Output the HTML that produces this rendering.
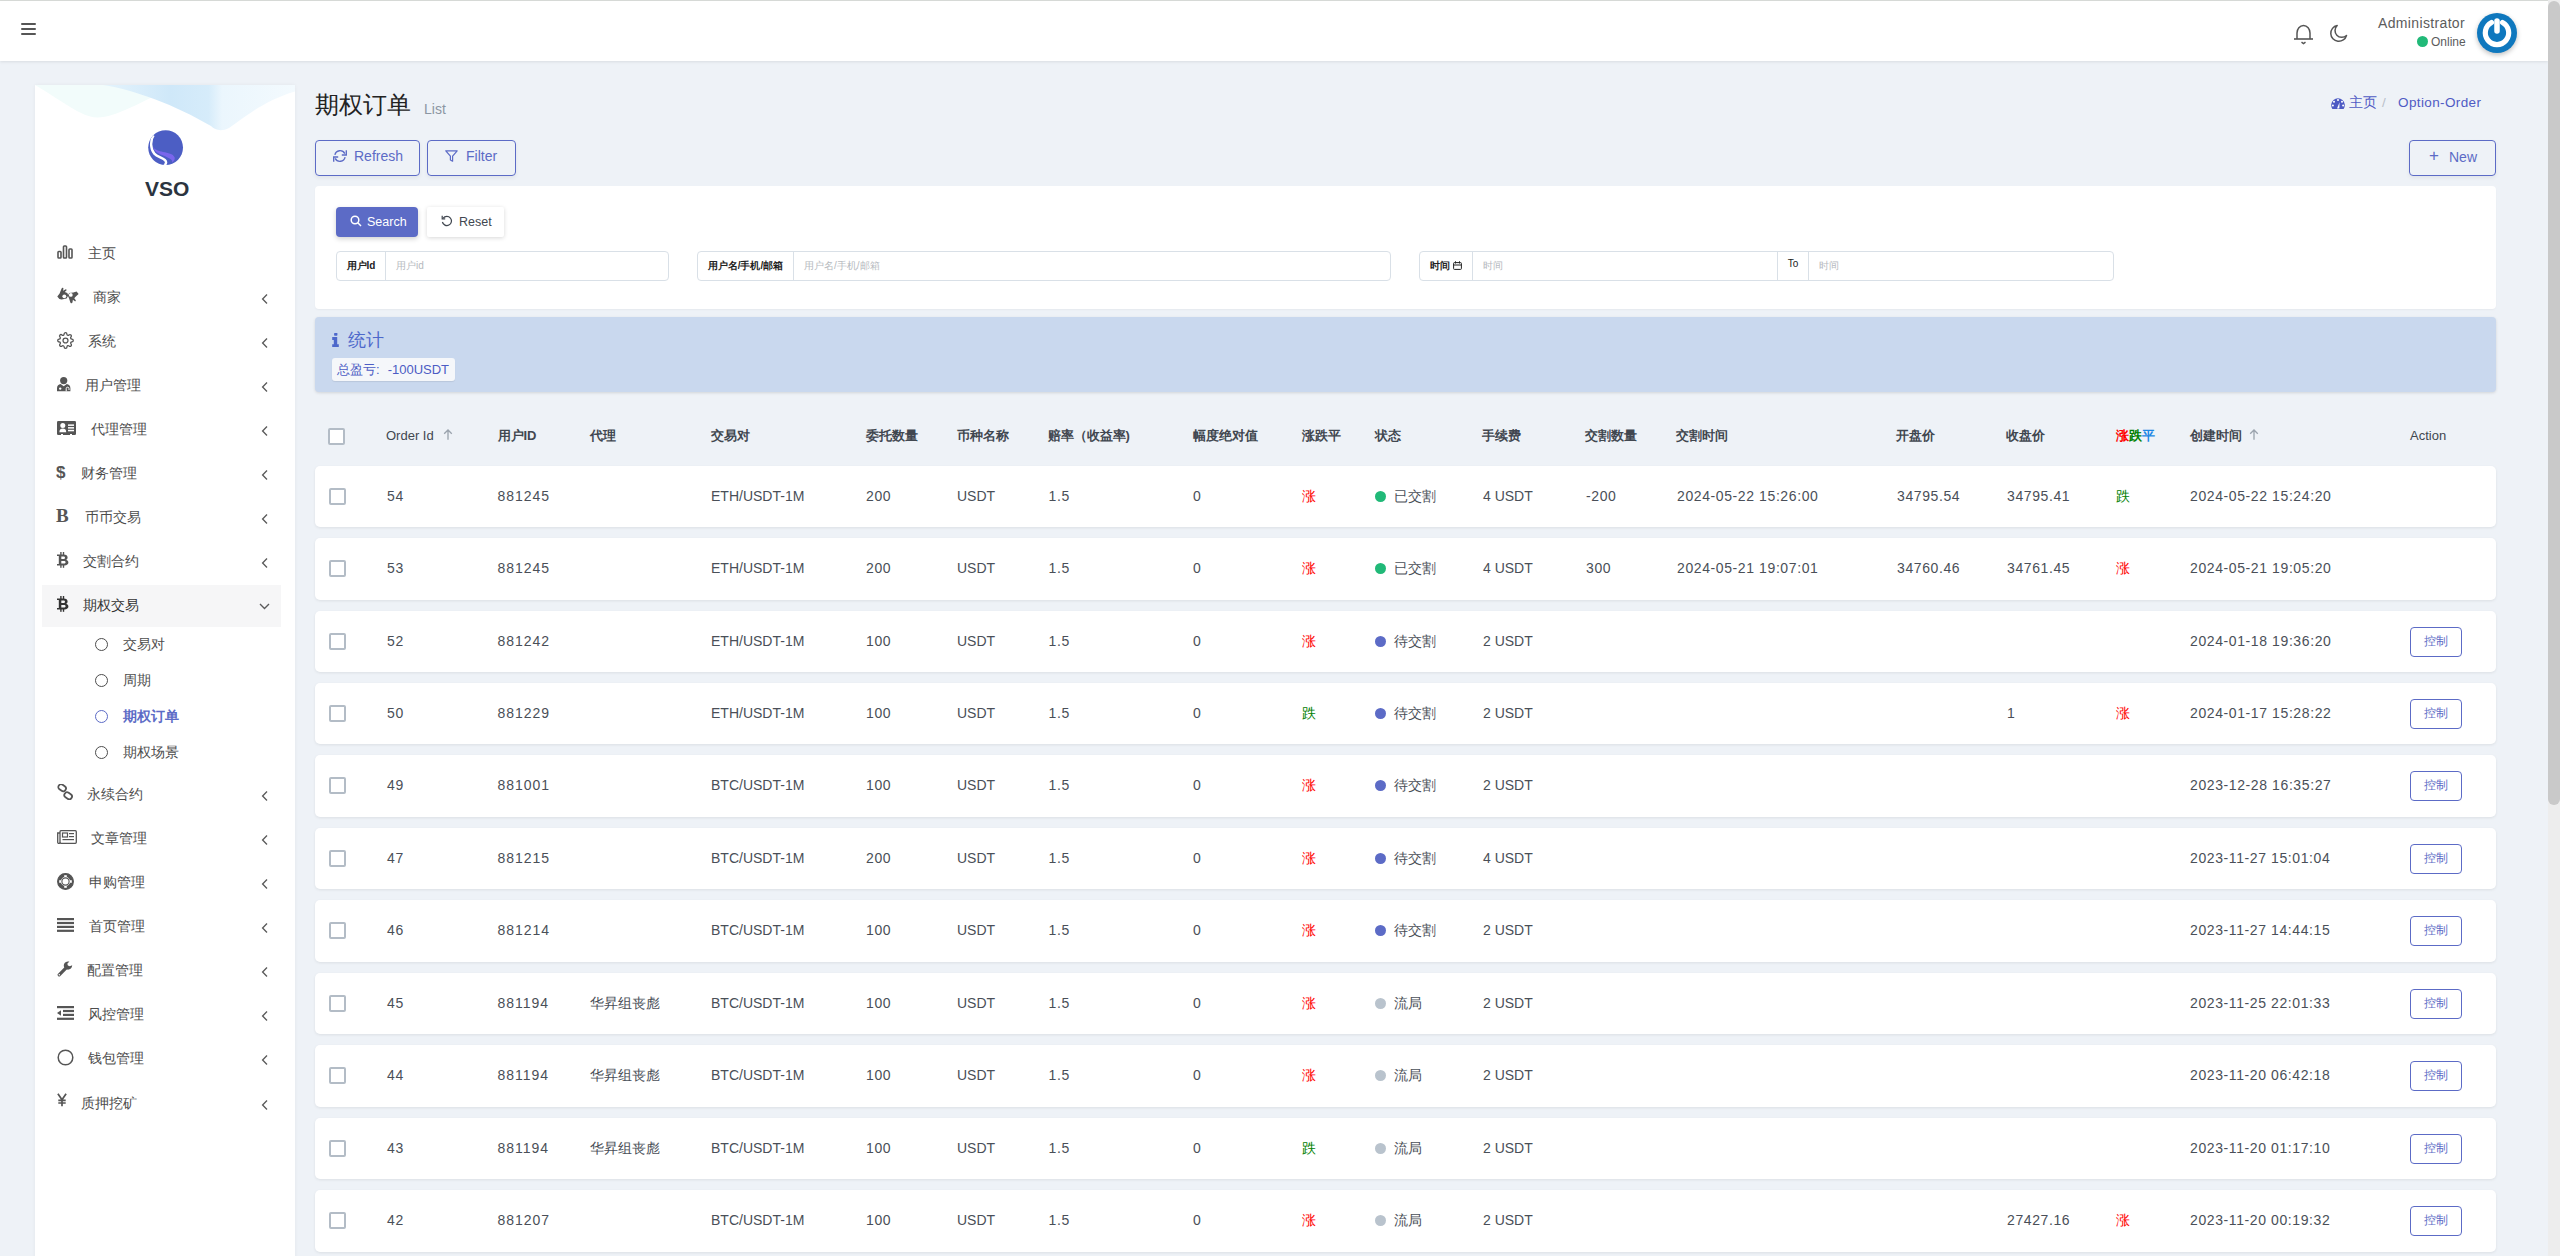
<!DOCTYPE html>
<html><head><meta charset="utf-8"><title>期权订单</title><style>
*{box-sizing:border-box;margin:0;padding:0}
html,body{width:2560px;height:1256px;overflow:hidden}
body{background:#eef2f7;font-family:"Liberation Sans",sans-serif;color:#414750;font-size:14px;position:relative}
.a{position:absolute;white-space:nowrap}
.n{letter-spacing:.6px}
#topline{left:0;top:0;width:2548px;height:1px;background:#d9dcd9}
#nav{left:0;top:1px;width:2548px;height:60px;background:#fff;box-shadow:0 1px 3px rgba(0,0,0,.09)}
.hb{left:21px;width:15px;height:2px;background:#565656;border-radius:1px}
#side{left:35px;top:85px;width:260px;height:1200px;background:#fff;box-shadow:0 0 4px rgba(0,0,0,.05)}
.mi{left:0;width:260px;height:44px;color:#4d4d4d;font-size:14px}
.mi .t{position:absolute;top:0;line-height:44px}
.mi .ic{position:absolute}
.chev{position:absolute;left:225.5px;top:18.5px;width:7px;height:10px}
.card{background:#fff;border-radius:4px}
.btn-o{border:1px solid #5c6bc6;border-radius:4px;color:#5c6bc6;box-shadow:0 2px 4px rgba(0,0,0,.06)}
.row{left:315px;width:2181px;height:61.5px;background:#fff;border-radius:5px;box-shadow:0 1px 3px rgba(0,0,0,.08)}
.row .c{position:absolute;top:0;line-height:61.5px;font-size:14px;color:#4a4f58;white-space:nowrap}
.chk{position:absolute;width:17px;height:17px;border:2px solid #b3bcc6;border-radius:2px;background:#fff}
.th{position:absolute;top:427px;line-height:18px;font-size:13px;font-weight:bold;color:#414750;white-space:nowrap}
.dot{display:inline-block;width:11px;height:11px;border-radius:50%;margin-right:8px;vertical-align:-1px}
.row .c.up{color:#f00}.row .c.dn{color:#008000}
.ctl{position:absolute;left:2095px;top:16px;width:52px;height:30px;border:1px solid #5c6bc6;border-radius:4px;color:#5c6bc6;font-size:12px;line-height:26px;text-align:center}
.ig{position:absolute;top:251px;height:30px;border:1px solid #d9e0e7;border-radius:4px;background:#fff}
.ig .lb{position:absolute;left:0;top:0;height:28px;line-height:28px;font-size:10px;font-weight:bold;color:#222;text-align:center;border-right:1px solid #d9e0e7}
.ig .ph{position:absolute;top:0;line-height:28px;font-size:10px;color:#b5b9be}
</style></head>
<body>
<div class="a" id="topline"></div>
<div class="a" id="nav">
  <div class="a hb" style="top:22px"></div><div class="a hb" style="top:27px"></div><div class="a hb" style="top:32px"></div>
  <svg class="a" style="left:2293px;top:23px" width="21" height="21" viewBox="0 0 21 21"><path d="M4 15 V9 C4 5 6.8 1.5 10.5 1.5 C14.2 1.5 17 5 17 9 V15" fill="none" stroke="#555" stroke-width="1.5"/><path d="M1 15 H20" stroke="#555" stroke-width="1.6"/><path d="M8.5 18.2 L10.5 19.6 L12.5 18.2" fill="none" stroke="#555" stroke-width="1.5"/></svg>
  <svg class="a" style="left:2329px;top:23px" width="19" height="19" viewBox="0 0 19 19"><path d="M8.2 1.5 A8 8 0 1 0 17.5 11.5 A6.3 6.3 0 0 1 8.2 1.5 Z" fill="none" stroke="#555" stroke-width="1.5" stroke-linejoin="round"/></svg>
  <div class="a" style="left:2378px;top:13px;font-size:14px;letter-spacing:.35px;color:#5c5c5c;line-height:18px">Administrator</div>
  <div class="a" style="left:2417px;top:35px;width:11px;height:11px;border-radius:50%;background:#21b978"></div>
  <div class="a" style="left:2431px;top:33px;font-size:12px;color:#5c5c5c;line-height:16px">Online</div>
  <div class="a" style="left:2477px;top:12px;width:40px;height:40px;border-radius:50%;background:#0f78be;box-shadow:0 2px 5px rgba(0,0,0,.25)"></div>
  <svg class="a" style="left:2477px;top:12px" width="40" height="40" viewBox="0 0 40 40"><path d="M14.5 9.5 A11.7 11.7 0 1 0 25.5 9.5" fill="none" stroke="#fff" stroke-width="5.2" stroke-linecap="round"/><path d="M20 8 V18" stroke="#fff" stroke-width="5.5" stroke-linecap="round"/></svg>
</div>
<div class="a" id="side">
  <svg class="a" style="left:0;top:0" width="260" height="50" viewBox="0 0 260 50">
    <defs>
     <linearGradient id="g2" x1="0" y1="0" x2="1" y2="0"><stop offset="0" stop-color="#e4f3fc"/><stop offset=".35" stop-color="#cfe8f9"/><stop offset=".55" stop-color="#d6ecfa"/><stop offset=".62" stop-color="#ebf6fd"/><stop offset="1" stop-color="#f3fafe"/></linearGradient>
    </defs>
    <path d="M0 0 C25 14 45 32 62 32.5 C80 33 105 17 135 4 L140 0 Z" fill="#f2fcfb"/>
    <path d="M68 0 C100 5 140 20 176 41 C180 45 186 47 194 43 C210 32 230 15 260 6.5 L260 0 Z" fill="url(#g2)"/>
  </svg>
  <svg class="a" style="left:112.5px;top:44.5px" width="36" height="36" viewBox="0 0 36 36">
    <defs><clipPath id="lc"><circle cx="17.6" cy="17.6" r="17.4"/></clipPath></defs>
    <circle cx="17.6" cy="17.6" r="17.4" fill="#4c5ec4"/>
    <g clip-path="url(#lc)">
    <path d="M4.6 16.6 C7 20.3 11 21 15 22 C20 23 25 23.5 26.7 27.5 C27.2 29.5 25.8 31.2 24.2 32.6 C24.4 30.6 23.4 29.1 21.6 28.4 C19 27.1 16.5 26.1 14 25.1 C10 23.6 6.2 21.4 4.6 16.6 Z" fill="#7a66ec"/>
    <path d="M5.6 5.4 C2.2 10 2.2 19 6.3 23.6 C9 26.6 13.8 27.6 16.8 30 C18.7 31.6 18.4 33.6 16.4 35.4" fill="none" stroke="#fff" stroke-width="2.4"/>
    </g>
  </svg>
  <div class="a" style="left:110px;top:92px;font-size:21px;font-weight:bold;color:#2b3440;line-height:24px">VSO</div>
  <div class="a mi" style="top:146px"><svg class="ic" style="left:22px;top:14px" width="16" height="14" viewBox="0 0 16 14"><g fill="none" stroke="#555" stroke-width="1.6"><rect x="1" y="6.5" width="3" height="6.5" rx=".8"/><rect x="6.5" y="1" width="3" height="12" rx=".8"/><rect x="12" y="4" width="3" height="9" rx=".8"/></g></svg><div class="t" style="left:53px;">主页</div></div>
<div class="a mi" style="top:190px"><svg class="ic" style="left:22px;top:11.5px" width="22" height="17" viewBox="0 0 22 17"><path fill="#555" d="M0.3 9.6 L2.6 6.4 L4.6 1.4 C5.1 0.2 6.7 0.5 6.4 1.9 L6.0 3.8 L8.4 2.4 C9.3 1.9 10.1 2.9 9.3 3.6 L7.8 5.0 L10.3 6.1 L11.3 8.6 L9.6 11.6 L4.6 12.6 L2.4 11.9 Z"/><path fill="#555" d="M21.6 6.9 L19.6 4.6 L16.4 5.4 L12.2 5.9 L10.8 8.6 L12.0 11.2 L13.2 15.0 C13.5 16.6 15.2 16.8 15.5 15.2 L15.9 12.7 L17.6 14.0 C18.4 14.6 19.2 13.7 18.6 12.9 L17.3 11.3 L18.3 10.0 Z"/><circle cx="7.3" cy="9.3" r="1.9" fill="#fff"/><circle cx="13.8" cy="7.9" r="1.9" fill="#fff"/></svg><div class="t" style="left:58px;">商家</div><svg class="chev" viewBox="0 0 7 10"><path d="M6 0.6 L1.6 5 L6 9.4" fill="none" stroke="#5a5a5a" stroke-width="1.35"/></svg></div>
<div class="a mi" style="top:234px"><svg class="ic" style="left:22px;top:13px" width="17" height="17" viewBox="0 0 24 24"><path fill="none" stroke="#555" stroke-width="1.8" d="M12 15.5a3.5 3.5 0 1 0 0-7 3.5 3.5 0 0 0 0 7z"/><path fill="none" stroke="#555" stroke-width="1.8" d="M19.4 15a1.65 1.65 0 0 0 .33 1.82l.06.06a2 2 0 1 1-2.83 2.83l-.06-.06a1.65 1.65 0 0 0-1.82-.33 1.65 1.65 0 0 0-1 1.51V21a2 2 0 1 1-4 0v-.09A1.65 1.65 0 0 0 9 19.4a1.65 1.65 0 0 0-1.82.33l-.06.06a2 2 0 1 1-2.83-2.83l.06-.06A1.65 1.65 0 0 0 4.68 15a1.65 1.65 0 0 0-1.51-1H3a2 2 0 1 1 0-4h.09A1.65 1.65 0 0 0 4.6 9a1.65 1.65 0 0 0-.33-1.82l-.06-.06a2 2 0 1 1 2.83-2.83l.06.06A1.65 1.65 0 0 0 9 4.68a1.65 1.65 0 0 0 1-1.51V3a2 2 0 1 1 4 0v.09a1.65 1.65 0 0 0 1 1.51 1.65 1.65 0 0 0 1.82-.33l.06-.06a2 2 0 1 1 2.83 2.83l-.06.06A1.65 1.65 0 0 0 19.4 9a1.65 1.65 0 0 0 1.51 1H21a2 2 0 1 1 0 4h-.09a1.65 1.65 0 0 0-1.51 1z"/></svg><div class="t" style="left:53px;">系统</div><svg class="chev" viewBox="0 0 7 10"><path d="M6 0.6 L1.6 5 L6 9.4" fill="none" stroke="#5a5a5a" stroke-width="1.35"/></svg></div>
<div class="a mi" style="top:278px"><svg class="ic" style="left:22px;top:14px" width="14" height="15" viewBox="0 0 14 15"><circle cx="6.7" cy="3.6" r="3.6" fill="#555"/><path d="M0 14.3 V11.2 C0 8.8 1.6 7.3 3.6 7.0 L6.7 9.2 L9.8 7.0 C11.8 7.3 13.4 8.8 13.4 11.2 V14.3 Z" fill="#555"/><circle cx="3.2" cy="11.6" r="1.2" fill="#fff"/><path d="M9.2 14.3 V11.6 a1.4 1.4 0 0 1 2.8 0 V13" fill="none" stroke="#fff" stroke-width="1"/></svg><div class="t" style="left:50px;">用户管理</div><svg class="chev" viewBox="0 0 7 10"><path d="M6 0.6 L1.6 5 L6 9.4" fill="none" stroke="#5a5a5a" stroke-width="1.35"/></svg></div>
<div class="a mi" style="top:322px"><svg class="ic" style="left:22px;top:14px" width="19" height="14" viewBox="0 0 19 14"><rect x="0" y="0" width="19" height="14" rx="1.3" fill="#555"/><circle cx="5.8" cy="4.6" r="2.5" fill="#fff"/><path d="M2.4 11.3 C2.4 8.2 3.8 7.4 5.8 7.4 C7.8 7.4 9.2 8.2 9.2 11.3 Z" fill="#fff"/><rect x="11" y="3.4" width="6" height="1.5" fill="#fff"/><rect x="11" y="6.1" width="6" height="1.5" fill="#fff"/><rect x="11" y="8.8" width="6" height="1.5" fill="#fff"/><rect x="4" y="13" width="2" height="1" fill="#fff"/><rect x="13" y="13" width="2" height="1" fill="#fff"/></svg><div class="t" style="left:56px;">代理管理</div><svg class="chev" viewBox="0 0 7 10"><path d="M6 0.6 L1.6 5 L6 9.4" fill="none" stroke="#5a5a5a" stroke-width="1.35"/></svg></div>
<div class="a mi" style="top:366px"><div class="ic" style="left:21px;top:1px;line-height:42px;font-size:17px;font-weight:bold;color:#555">$</div><div class="t" style="left:46px;">财务管理</div><svg class="chev" viewBox="0 0 7 10"><path d="M6 0.6 L1.6 5 L6 9.4" fill="none" stroke="#5a5a5a" stroke-width="1.35"/></svg></div>
<div class="a mi" style="top:410px"><div class="ic" style="left:21px;top:0;line-height:42px;font-size:19px;font-weight:bold;color:#555;font-family:'Liberation Serif',serif">B</div><div class="t" style="left:50px;">币币交易</div><svg class="chev" viewBox="0 0 7 10"><path d="M6 0.6 L1.6 5 L6 9.4" fill="none" stroke="#5a5a5a" stroke-width="1.35"/></svg></div>
<div class="a mi" style="top:454px"><svg class="ic" style="left:22px;top:13px" width="12" height="16" viewBox="0 0 12 16"><path fill="#555" fill-rule="evenodd" d="M0 2.6 H6.6 C9.3 2.6 10.6 3.9 10.6 5.6 C10.6 6.8 9.9 7.5 9.1 7.8 C10.4 8.2 11.4 9.2 11.4 10.6 C11.4 12.5 9.9 13.4 7.4 13.4 H0 V11.9 H1.8 V4.1 H0 Z M4.3 4.5 V7.1 H6.3 C7.4 7.1 8.0 6.6 8.0 5.8 C8.0 5.0 7.4 4.5 6.3 4.5 Z M4.3 8.9 V11.5 H6.7 C7.9 11.5 8.6 11.0 8.6 10.2 C8.6 9.4 7.9 8.9 6.7 8.9 Z"/><g fill="#555"><rect x="3.2" y="0" width="1.4" height="3"/><rect x="5.8" y="0" width="1.4" height="3"/><rect x="3.2" y="13" width="1.4" height="2.8"/><rect x="5.8" y="13" width="1.4" height="2.8"/></g></svg><div class="t" style="left:48px;">交割合约</div><svg class="chev" viewBox="0 0 7 10"><path d="M6 0.6 L1.6 5 L6 9.4" fill="none" stroke="#5a5a5a" stroke-width="1.35"/></svg></div>
<div class="a mi" style="top:498px"><div class="a" style="left:7px;top:1.5px;width:239px;height:42px;background:#f6f6f7"></div><svg class="ic" style="left:22px;top:13px" width="12" height="16" viewBox="0 0 12 16"><path fill="#333" fill-rule="evenodd" d="M0 2.6 H6.6 C9.3 2.6 10.6 3.9 10.6 5.6 C10.6 6.8 9.9 7.5 9.1 7.8 C10.4 8.2 11.4 9.2 11.4 10.6 C11.4 12.5 9.9 13.4 7.4 13.4 H0 V11.9 H1.8 V4.1 H0 Z M4.3 4.5 V7.1 H6.3 C7.4 7.1 8.0 6.6 8.0 5.8 C8.0 5.0 7.4 4.5 6.3 4.5 Z M4.3 8.9 V11.5 H6.7 C7.9 11.5 8.6 11.0 8.6 10.2 C8.6 9.4 7.9 8.9 6.7 8.9 Z"/><g fill="#333"><rect x="3.2" y="0" width="1.4" height="3"/><rect x="5.8" y="0" width="1.4" height="3"/><rect x="3.2" y="13" width="1.4" height="2.8"/><rect x="5.8" y="13" width="1.4" height="2.8"/></g></svg><div class="t" style="left:48px;color:#333;">期权交易</div><svg class="chev" style="left:223.5px;top:20px;width:11px;height:7px" viewBox="0 0 11 7"><path d="M1 1 L5.5 5.5 L10 1" fill="none" stroke="#5a5a5a" stroke-width="1.35"/></svg></div>
<div class="a mi" style="top:687px"><svg class="ic" style="left:22px;top:12px" width="16" height="16" viewBox="0 0 16 16"><g fill="none" stroke="#555" stroke-width="1.8"><rect x="1" y="1" width="8" height="5.5" rx="2.7" transform="rotate(35 5 4)"/><rect x="7" y="9" width="8" height="5.5" rx="2.7" transform="rotate(35 11 12)"/></g></svg><div class="t" style="left:52px;">永续合约</div><svg class="chev" viewBox="0 0 7 10"><path d="M6 0.6 L1.6 5 L6 9.4" fill="none" stroke="#5a5a5a" stroke-width="1.35"/></svg></div>
<div class="a mi" style="top:731px"><svg class="ic" style="left:22px;top:14px" width="20" height="14" viewBox="0 0 20 14"><g fill="none" stroke="#555" stroke-width="1.3"><rect x="3" y="0.7" width="16.3" height="12.6" rx="1"/><path d="M3 3 H0.7 V12.3 a1 1 0 0 0 2.3 0"/></g><rect x="5.5" y="3" width="5" height="4" fill="none" stroke="#555" stroke-width="1.2"/><g fill="#555"><rect x="12" y="3" width="5" height="1.2"/><rect x="12" y="6" width="5" height="1.2"/><rect x="5.5" y="9" width="11.5" height="1.2"/></g></svg><div class="t" style="left:56px;">文章管理</div><svg class="chev" viewBox="0 0 7 10"><path d="M6 0.6 L1.6 5 L6 9.4" fill="none" stroke="#5a5a5a" stroke-width="1.35"/></svg></div>
<div class="a mi" style="top:775px"><svg class="ic" style="left:22px;top:13.2px" width="17" height="17" viewBox="0 0 17 17"><circle cx="8.5" cy="8.5" r="6.3" fill="none" stroke="#555" stroke-width="3.2"/><g stroke="#fff" stroke-width="2.6"><path d="M8.5 2.2 V4.6"/><path d="M8.5 12.4 V14.8"/><path d="M2.2 8.5 H4.6"/><path d="M12.4 8.5 H14.8"/></g><circle cx="8.5" cy="8.5" r="7.9" fill="none" stroke="#555" stroke-width="1.1"/><circle cx="8.5" cy="8.5" r="3.6" fill="none" stroke="#555" stroke-width="1.1"/></svg><div class="t" style="left:54px;">申购管理</div><svg class="chev" viewBox="0 0 7 10"><path d="M6 0.6 L1.6 5 L6 9.4" fill="none" stroke="#5a5a5a" stroke-width="1.35"/></svg></div>
<div class="a mi" style="top:819px"><svg class="ic" style="left:22px;top:14px" width="17" height="14" viewBox="0 0 17 14"><g fill="#555"><rect y="0" width="17" height="2.2"/><rect y="3.9" width="17" height="2.2"/><rect y="7.8" width="17" height="2.2"/><rect y="11.7" width="17" height="2.2"/></g></svg><div class="t" style="left:54px;">首页管理</div><svg class="chev" viewBox="0 0 7 10"><path d="M6 0.6 L1.6 5 L6 9.4" fill="none" stroke="#5a5a5a" stroke-width="1.35"/></svg></div>
<div class="a mi" style="top:863px"><svg class="ic" style="left:22px;top:13px" width="16" height="16" viewBox="0 0 16 16"><path d="M2.2 13.8 L8.6 7.4" stroke="#555" stroke-width="3.2" stroke-linecap="round"/><path d="M15.2 4.2 C15.2 7.0 12.8 9.0 10.2 8.6 C7.6 8.2 6.2 5.6 7.0 3.2 C7.8 0.9 10.2 -0.1 12.4 0.6 L10.3 2.7 L10.9 4.6 L12.8 5.3 Z" fill="#555"/><circle cx="2.3" cy="13.7" r=".75" fill="#fff"/></svg><div class="t" style="left:52px;">配置管理</div><svg class="chev" viewBox="0 0 7 10"><path d="M6 0.6 L1.6 5 L6 9.4" fill="none" stroke="#5a5a5a" stroke-width="1.35"/></svg></div>
<div class="a mi" style="top:907px"><svg class="ic" style="left:22px;top:14px" width="17" height="14" viewBox="0 0 17 14"><g fill="#555"><rect y="0" width="17" height="2.2"/><rect x="6" y="3.9" width="11" height="2.2"/><rect x="6" y="7.8" width="11" height="2.2"/><rect y="11.7" width="17" height="2.2"/><path d="M0 7 L4 4.2 L4 9.8 Z"/></g></svg><div class="t" style="left:53px;">风控管理</div><svg class="chev" viewBox="0 0 7 10"><path d="M6 0.6 L1.6 5 L6 9.4" fill="none" stroke="#5a5a5a" stroke-width="1.35"/></svg></div>
<div class="a mi" style="top:951px"><svg class="ic" style="left:22px;top:13px" width="17" height="17" viewBox="0 0 17 17"><circle cx="8.5" cy="8.5" r="7.3" fill="none" stroke="#555" stroke-width="1.5"/></svg><div class="t" style="left:53px;">钱包管理</div><svg class="chev" viewBox="0 0 7 10"><path d="M6 0.6 L1.6 5 L6 9.4" fill="none" stroke="#5a5a5a" stroke-width="1.35"/></svg></div>
<div class="a mi" style="top:996px"><svg class="ic" style="left:22px;top:11.5px" width="10" height="14" viewBox="0 0 10 14"><path d="M0.9 0.8 L5 6.8 L9.1 0.8 M5 6.8 V13.3 M1.3 7.4 H8.7 M1.3 10.0 H8.7" fill="none" stroke="#555" stroke-width="1.7"/></svg><div class="t" style="left:46px;">质押挖矿</div><svg class="chev" viewBox="0 0 7 10"><path d="M6 0.6 L1.6 5 L6 9.4" fill="none" stroke="#5a5a5a" stroke-width="1.35"/></svg></div>
<div class="a" style="left:59.5px;top:552.5px;width:13.5px;height:13.5px;border:1.7px solid #4d4d4d;border-radius:50%"></div>
<div class="a" style="left:88px;top:541px;line-height:36px;color:#4d4d4d;font-weight:normal">交易对</div>
<div class="a" style="left:59.5px;top:588.5px;width:13.5px;height:13.5px;border:1.7px solid #4d4d4d;border-radius:50%"></div>
<div class="a" style="left:88px;top:577px;line-height:36px;color:#4d4d4d;font-weight:normal">周期</div>
<div class="a" style="left:59.5px;top:624.5px;width:13.5px;height:13.5px;border:1.7px solid #5c6bc6;border-radius:50%"></div>
<div class="a" style="left:88px;top:613px;line-height:36px;color:#5c6bc6;font-weight:bold">期权订单</div>
<div class="a" style="left:59.5px;top:660.5px;width:13.5px;height:13.5px;border:1.7px solid #4d4d4d;border-radius:50%"></div>
<div class="a" style="left:88px;top:649px;line-height:36px;color:#4d4d4d;font-weight:normal">期权场景</div>
</div>
<div class="a" style="left:315px;top:89px;font-size:24px;color:#222;line-height:32px">期权订单</div>
<div class="a" style="left:424px;top:100px;font-size:14px;color:#8c96a3;line-height:18px">List</div>
<svg class="a" style="left:2331px;top:98px" width="14" height="11" viewBox="0 0 14 11"><path d="M1.4 11 A6.8 6.8 0 1 1 12.6 11 Z" fill="#4e5bc4"/><g fill="#fff"><circle cx="7" cy="2" r="1"/><circle cx="3" cy="3.8" r="1"/><circle cx="11" cy="3.8" r="1"/><circle cx="1.9" cy="7.6" r="1"/><circle cx="12.1" cy="7.6" r="1"/><path d="M6 10.6 L8.6 4.2 L8.3 10.6 Z"/></g></svg>
<div class="a" style="left:2349px;top:94px;font-size:13.5px;color:#4e5bc4;line-height:18px">主页</div>
<div class="a" style="left:2382px;top:94px;font-size:13.5px;color:#b9c0c9;line-height:18px">/</div>
<div class="a" style="left:2398px;top:94px;font-size:13.5px;color:#4e5bc4;line-height:18px;letter-spacing:.38px">Option-Order</div>

<div class="a btn-o" style="left:315px;top:140px;width:105px;height:36px"></div>
<svg class="a" style="left:333px;top:150px" width="14" height="12" viewBox="0 0 14 12"><g fill="none" stroke="#5c6bc6" stroke-width="1.35"><path d="M1.9 4.9 A5.3 5.3 0 0 1 11.8 3.6"/><path d="M13.3 0.3 V5 H8.8"/><path d="M12.1 7.1 A5.3 5.3 0 0 1 2.2 8.4"/><path d="M0.7 11.7 V7 H5.2"/></g></svg>
<div class="a" style="left:354px;top:147px;font-size:14px;color:#5c6bc6;line-height:18px">Refresh</div>
<div class="a btn-o" style="left:427px;top:140px;width:89px;height:36px"></div>
<svg class="a" style="left:445px;top:150px" width="13" height="12" viewBox="0 0 13 12"><path d="M0.8 0.8 H12.2 L7.6 6.2 V11.2 L5.4 10 V6.2 Z" fill="none" stroke="#5c6bc6" stroke-width="1.2" stroke-linejoin="round"/></svg>
<div class="a" style="left:466px;top:147px;font-size:14px;color:#5c6bc6;line-height:18px">Filter</div>
<div class="a btn-o" style="left:2409px;top:140px;width:87px;height:36px"></div>
<div class="a" style="left:2429px;top:146px;font-size:17px;color:#5c6bc6;line-height:20px">+</div>
<div class="a" style="left:2449px;top:148px;font-size:14px;color:#5c6bc6;line-height:18px">New</div>

<div class="a card" style="left:315px;top:186px;width:2181px;height:123px;box-shadow:0 1px 2px rgba(0,0,0,.04)"></div>
<div class="a" style="left:336px;top:207px;width:82px;height:30px;background:#5c6bc6;border-radius:4px;box-shadow:0 2px 5px rgba(0,0,0,.18)"></div>
<svg class="a" style="left:350px;top:215px" width="12" height="12" viewBox="0 0 12 12"><circle cx="5" cy="5" r="3.8" fill="none" stroke="#fff" stroke-width="1.5"/><path d="M7.8 7.8 L11 11" stroke="#fff" stroke-width="1.5"/></svg>
<div class="a" style="left:367px;top:214px;font-size:12.5px;color:#fff;line-height:16px">Search</div>
<div class="a" style="left:427px;top:207px;width:77px;height:30px;background:#fff;border-radius:2px;box-shadow:0 1px 4px rgba(0,0,0,.16)"></div>
<svg class="a" style="left:441px;top:215px" width="12" height="12" viewBox="0 0 12 12"><path d="M2.2 3.2 A4.6 4.6 0 1 1 1.4 7" fill="none" stroke="#414750" stroke-width="1.2"/><path d="M1.2 0.8 V3.8 H4.2" fill="none" stroke="#414750" stroke-width="1.2"/></svg>
<div class="a" style="left:459px;top:214px;font-size:12.5px;color:#414750;line-height:16px">Reset</div>

<div class="ig" style="left:336px;width:333px"><div class="lb" style="width:49px">用户Id</div><div class="ph" style="left:59px">用户id</div></div>
<div class="ig" style="left:697px;width:694px"><div class="lb" style="width:96px">用户名/手机/邮箱</div><div class="ph" style="left:106px">用户名/手机/邮箱</div></div>
<div class="ig" style="left:1419px;width:695px"><div class="lb" style="width:53px">时间 <svg width="9" height="9" viewBox="0 0 9 9" style="vertical-align:-1px"><rect x=".6" y="1.6" width="7.8" height="6.8" rx=".8" fill="none" stroke="#222" stroke-width="1"/><path d="M.6 4 H8.4 M2.5 .3 V2.5 M6.5 .3 V2.5" stroke="#222" stroke-width="1"/></svg></div><div class="ph" style="left:63px">时间</div>
  <div class="a" style="left:357px;top:0;width:32px;height:28px;border-left:1px solid #d9e0e7;border-right:1px solid #d9e0e7;font-size:10px;color:#222;line-height:24px;text-align:center">To</div>
  <div class="ph" style="left:399px">时间</div></div>

<div class="a" style="left:315px;top:317px;width:2181px;height:75px;background:#c9d8ee;border-radius:4px;box-shadow:0 1px 3px rgba(0,0,0,.12)"></div>
<svg class="a" style="left:332px;top:333px" width="7" height="14" viewBox="0 0 7 14"><rect x="2.1" y="0" width="3.3" height="2.7" rx=".6" fill="#4d68cb"/><path d="M0.2 4.1 H5.2 V11.2 H6.8 V14 H0.2 V11.2 H1.8 V6.9 H0.2 Z" fill="#4d68cb"/></svg>
<div class="a" style="left:348px;top:328px;font-size:18px;color:#4d68cb;line-height:24px">统计</div>
<div class="a" style="left:332px;top:358px;width:123px;height:23px;background:#f5f7fa;border-radius:3px;box-shadow:0 1px 1px rgba(0,0,0,.08)"></div>
<div class="a" style="left:337px;top:361px;font-size:13px;color:#4c5cc4;line-height:17px">总盈亏<span style="margin-right:8px">:</span>-100USDT</div>

<div class="chk" style="left:328px;top:428px"></div>
<div class="th" style="left:386px;font-weight:normal">Order Id</div>
<div class="th" style="left:497.5px;font-weight:bold">用户ID</div>
<div class="th" style="left:590px;font-weight:bold">代理</div>
<div class="th" style="left:711px;font-weight:bold">交易对</div>
<div class="th" style="left:865.5px;font-weight:bold">委托数量</div>
<div class="th" style="left:957px;font-weight:bold">币种名称</div>
<div class="th" style="left:1047.5px;font-weight:bold">赔率（收益率)</div>
<div class="th" style="left:1192.5px;font-weight:bold">幅度绝对值</div>
<div class="th" style="left:1302px;font-weight:bold">涨跌平</div>
<div class="th" style="left:1375px;font-weight:bold">状态</div>
<div class="th" style="left:1482px;font-weight:bold">手续费</div>
<div class="th" style="left:1585px;font-weight:bold">交割数量</div>
<div class="th" style="left:1676px;font-weight:bold">交割时间</div>
<div class="th" style="left:1896px;font-weight:bold">开盘价</div>
<div class="th" style="left:2006px;font-weight:bold">收盘价</div>
<div class="th" style="left:2116px;font-weight:bold"><span style="color:#f00">涨</span><span style="color:#008000">跌</span><span style="color:#1e88e5">平</span></div>
<div class="th" style="left:2190px;font-weight:bold">创建时间</div>
<div class="th" style="left:2410px;font-weight:normal">Action</div>
<svg class="a" style="left:443px;top:429px" width="10" height="11" viewBox="0 0 10 11"><path d="M5 10.8 V1.2 M1.2 4.8 L5 1 L8.8 4.8" fill="none" stroke="#9aa3ad" stroke-width="1.3"/></svg>
<svg class="a" style="left:2249px;top:429px" width="10" height="11" viewBox="0 0 10 11"><path d="M5 10.8 V1.2 M1.2 4.8 L5 1 L8.8 4.8" fill="none" stroke="#9aa3ad" stroke-width="1.3"/></svg>
<div class="a row" style="top:465.70px"><div class="chk" style="left:14px;top:22px"></div><div class="c n" style="left:72px">54</div><div class="c n" style="left:182.5px;letter-spacing:.95px">881245</div><div class="c" style="left:396px">ETH/USDT-1M</div><div class="c n" style="left:551px">200</div><div class="c" style="left:642px">USDT</div><div class="c n" style="left:733.5px">1.5</div><div class="c n" style="left:878px">0</div><div class="c up" style="left:987px">涨</div><div class="c" style="left:1060px"><span class="dot" style="background:#21b978"></span>已交割</div><div class="c" style="left:1168px">4 USDT</div><div class="c n" style="left:1271px">-200</div><div class="c n" style="left:1362px">2024-05-22 15:26:00</div><div class="c n" style="left:1582px">34795.54</div><div class="c n" style="left:1692px">34795.41</div><div class="c dn" style="left:1801px">跌</div><div class="c n" style="left:1875px">2024-05-22 15:24:20</div></div>
<div class="a row" style="top:538.13px"><div class="chk" style="left:14px;top:22px"></div><div class="c n" style="left:72px">53</div><div class="c n" style="left:182.5px;letter-spacing:.95px">881245</div><div class="c" style="left:396px">ETH/USDT-1M</div><div class="c n" style="left:551px">200</div><div class="c" style="left:642px">USDT</div><div class="c n" style="left:733.5px">1.5</div><div class="c n" style="left:878px">0</div><div class="c up" style="left:987px">涨</div><div class="c" style="left:1060px"><span class="dot" style="background:#21b978"></span>已交割</div><div class="c" style="left:1168px">4 USDT</div><div class="c n" style="left:1271px">300</div><div class="c n" style="left:1362px">2024-05-21 19:07:01</div><div class="c n" style="left:1582px">34760.46</div><div class="c n" style="left:1692px">34761.45</div><div class="c up" style="left:1801px">涨</div><div class="c n" style="left:1875px">2024-05-21 19:05:20</div></div>
<div class="a row" style="top:610.56px"><div class="chk" style="left:14px;top:22px"></div><div class="c n" style="left:72px">52</div><div class="c n" style="left:182.5px;letter-spacing:.95px">881242</div><div class="c" style="left:396px">ETH/USDT-1M</div><div class="c n" style="left:551px">100</div><div class="c" style="left:642px">USDT</div><div class="c n" style="left:733.5px">1.5</div><div class="c n" style="left:878px">0</div><div class="c up" style="left:987px">涨</div><div class="c" style="left:1060px"><span class="dot" style="background:#5c6bc6"></span>待交割</div><div class="c" style="left:1168px">2 USDT</div><div class="c n" style="left:1875px">2024-01-18 19:36:20</div><div class="ctl">控制</div></div>
<div class="a row" style="top:682.99px"><div class="chk" style="left:14px;top:22px"></div><div class="c n" style="left:72px">50</div><div class="c n" style="left:182.5px;letter-spacing:.95px">881229</div><div class="c" style="left:396px">ETH/USDT-1M</div><div class="c n" style="left:551px">100</div><div class="c" style="left:642px">USDT</div><div class="c n" style="left:733.5px">1.5</div><div class="c n" style="left:878px">0</div><div class="c dn" style="left:987px">跌</div><div class="c" style="left:1060px"><span class="dot" style="background:#5c6bc6"></span>待交割</div><div class="c" style="left:1168px">2 USDT</div><div class="c n" style="left:1692px">1</div><div class="c up" style="left:1801px">涨</div><div class="c n" style="left:1875px">2024-01-17 15:28:22</div><div class="ctl">控制</div></div>
<div class="a row" style="top:755.42px"><div class="chk" style="left:14px;top:22px"></div><div class="c n" style="left:72px">49</div><div class="c n" style="left:182.5px;letter-spacing:.95px">881001</div><div class="c" style="left:396px">BTC/USDT-1M</div><div class="c n" style="left:551px">100</div><div class="c" style="left:642px">USDT</div><div class="c n" style="left:733.5px">1.5</div><div class="c n" style="left:878px">0</div><div class="c up" style="left:987px">涨</div><div class="c" style="left:1060px"><span class="dot" style="background:#5c6bc6"></span>待交割</div><div class="c" style="left:1168px">2 USDT</div><div class="c n" style="left:1875px">2023-12-28 16:35:27</div><div class="ctl">控制</div></div>
<div class="a row" style="top:827.85px"><div class="chk" style="left:14px;top:22px"></div><div class="c n" style="left:72px">47</div><div class="c n" style="left:182.5px;letter-spacing:.95px">881215</div><div class="c" style="left:396px">BTC/USDT-1M</div><div class="c n" style="left:551px">200</div><div class="c" style="left:642px">USDT</div><div class="c n" style="left:733.5px">1.5</div><div class="c n" style="left:878px">0</div><div class="c up" style="left:987px">涨</div><div class="c" style="left:1060px"><span class="dot" style="background:#5c6bc6"></span>待交割</div><div class="c" style="left:1168px">4 USDT</div><div class="c n" style="left:1875px">2023-11-27 15:01:04</div><div class="ctl">控制</div></div>
<div class="a row" style="top:900.28px"><div class="chk" style="left:14px;top:22px"></div><div class="c n" style="left:72px">46</div><div class="c n" style="left:182.5px;letter-spacing:.95px">881214</div><div class="c" style="left:396px">BTC/USDT-1M</div><div class="c n" style="left:551px">100</div><div class="c" style="left:642px">USDT</div><div class="c n" style="left:733.5px">1.5</div><div class="c n" style="left:878px">0</div><div class="c up" style="left:987px">涨</div><div class="c" style="left:1060px"><span class="dot" style="background:#5c6bc6"></span>待交割</div><div class="c" style="left:1168px">2 USDT</div><div class="c n" style="left:1875px">2023-11-27 14:44:15</div><div class="ctl">控制</div></div>
<div class="a row" style="top:972.71px"><div class="chk" style="left:14px;top:22px"></div><div class="c n" style="left:72px">45</div><div class="c n" style="left:182.5px;letter-spacing:.95px">881194</div><div class="c" style="left:275px">华昇组丧彪</div><div class="c" style="left:396px">BTC/USDT-1M</div><div class="c n" style="left:551px">100</div><div class="c" style="left:642px">USDT</div><div class="c n" style="left:733.5px">1.5</div><div class="c n" style="left:878px">0</div><div class="c up" style="left:987px">涨</div><div class="c" style="left:1060px"><span class="dot" style="background:#b9c3cd"></span>流局</div><div class="c" style="left:1168px">2 USDT</div><div class="c n" style="left:1875px">2023-11-25 22:01:33</div><div class="ctl">控制</div></div>
<div class="a row" style="top:1045.14px"><div class="chk" style="left:14px;top:22px"></div><div class="c n" style="left:72px">44</div><div class="c n" style="left:182.5px;letter-spacing:.95px">881194</div><div class="c" style="left:275px">华昇组丧彪</div><div class="c" style="left:396px">BTC/USDT-1M</div><div class="c n" style="left:551px">100</div><div class="c" style="left:642px">USDT</div><div class="c n" style="left:733.5px">1.5</div><div class="c n" style="left:878px">0</div><div class="c up" style="left:987px">涨</div><div class="c" style="left:1060px"><span class="dot" style="background:#b9c3cd"></span>流局</div><div class="c" style="left:1168px">2 USDT</div><div class="c n" style="left:1875px">2023-11-20 06:42:18</div><div class="ctl">控制</div></div>
<div class="a row" style="top:1117.57px"><div class="chk" style="left:14px;top:22px"></div><div class="c n" style="left:72px">43</div><div class="c n" style="left:182.5px;letter-spacing:.95px">881194</div><div class="c" style="left:275px">华昇组丧彪</div><div class="c" style="left:396px">BTC/USDT-1M</div><div class="c n" style="left:551px">100</div><div class="c" style="left:642px">USDT</div><div class="c n" style="left:733.5px">1.5</div><div class="c n" style="left:878px">0</div><div class="c dn" style="left:987px">跌</div><div class="c" style="left:1060px"><span class="dot" style="background:#b9c3cd"></span>流局</div><div class="c" style="left:1168px">2 USDT</div><div class="c n" style="left:1875px">2023-11-20 01:17:10</div><div class="ctl">控制</div></div>
<div class="a row" style="top:1190.00px"><div class="chk" style="left:14px;top:22px"></div><div class="c n" style="left:72px">42</div><div class="c n" style="left:182.5px;letter-spacing:.95px">881207</div><div class="c" style="left:396px">BTC/USDT-1M</div><div class="c n" style="left:551px">100</div><div class="c" style="left:642px">USDT</div><div class="c n" style="left:733.5px">1.5</div><div class="c n" style="left:878px">0</div><div class="c up" style="left:987px">涨</div><div class="c" style="left:1060px"><span class="dot" style="background:#b9c3cd"></span>流局</div><div class="c" style="left:1168px">2 USDT</div><div class="c n" style="left:1692px">27427.16</div><div class="c up" style="left:1801px">涨</div><div class="c n" style="left:1875px">2023-11-20 00:19:32</div><div class="ctl">控制</div></div>

<div class="a" style="left:2548px;top:0;width:12px;height:1256px;background:#ededed"></div>
<div class="a" style="left:2548px;top:1px;width:12px;height:804px;background:#c9c9c9;border-radius:6px"></div>
</body></html>
